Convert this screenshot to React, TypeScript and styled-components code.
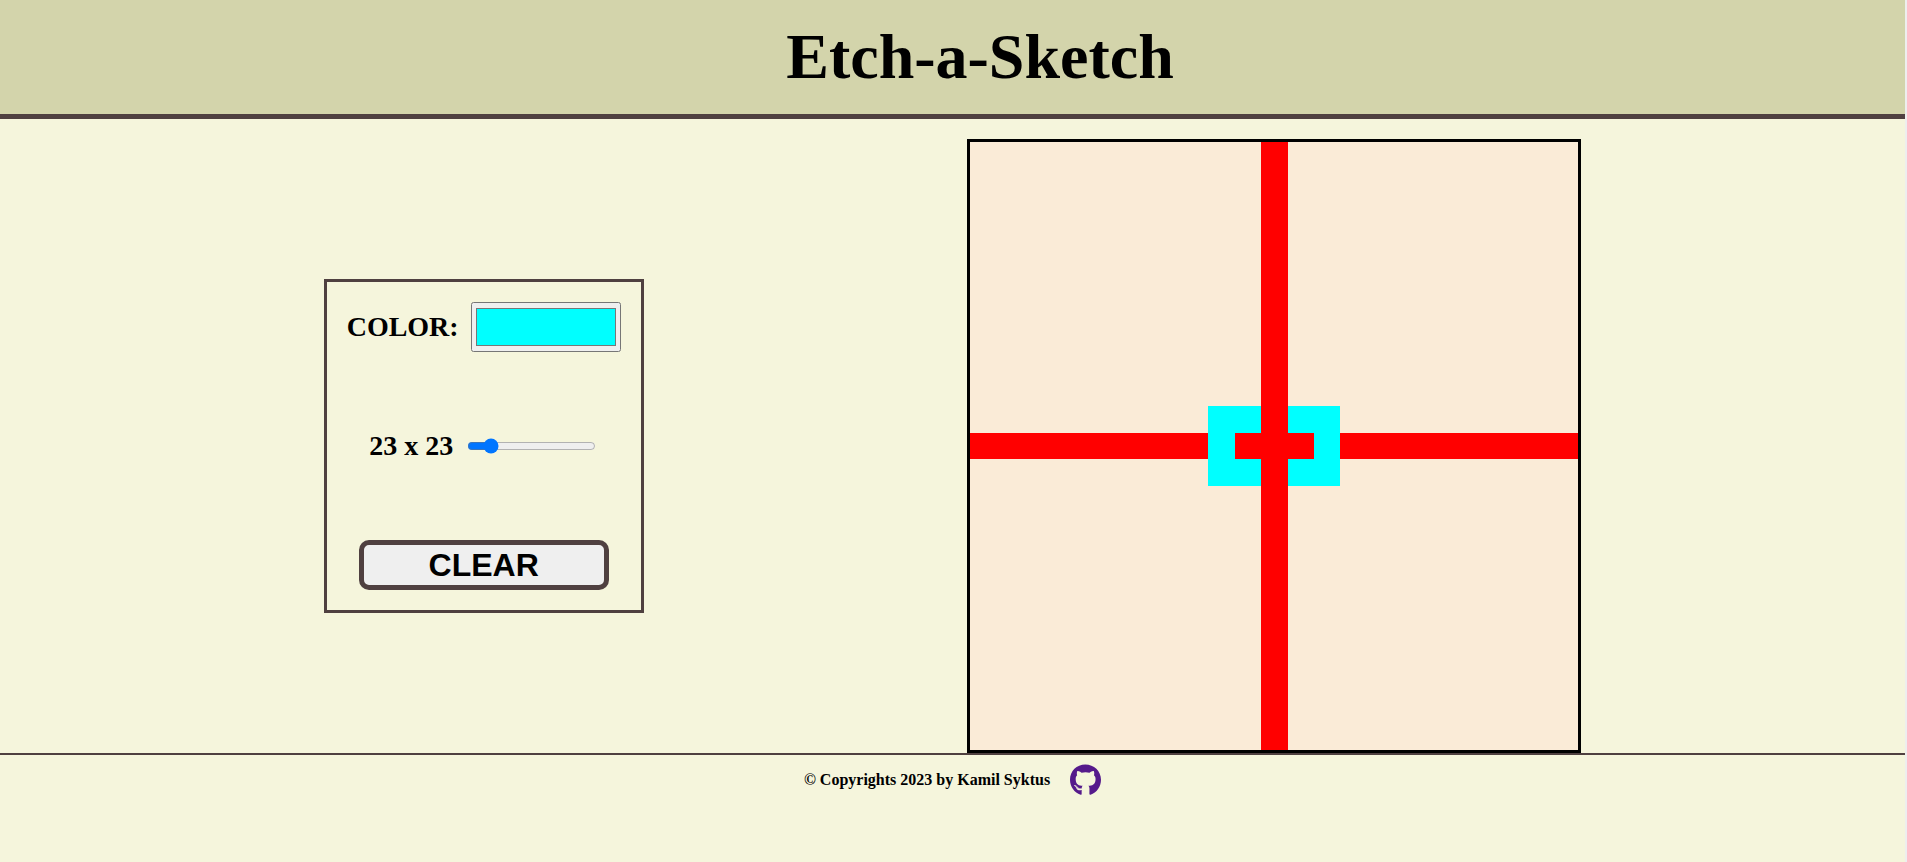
import React, { useState } from "react";
import styled, { createGlobalStyle } from "styled-components";
import { FaGithub } from "react-icons/fa";

const GlobalStyle = createGlobalStyle`
  *, *::before, *::after { box-sizing: border-box; }
  body {
    margin: 0;
    background: #f5f5dc;
    font-family: "Liberation Serif", "Times New Roman", serif;
    color: #000;
  }
`;

const Page = styled.div`
  display: flex;
  flex-direction: column;
  min-height: 100vh;
  border-right: 2px solid #eee;
`;

const Header = styled.header`
  padding: 20px 0 20px 55px;
  background: #d3d4ab;
  border-bottom: 5px solid #4f4040;
  text-align: center;
`;

const Title = styled.h1`
  margin: 0;
  font-size: 64px;
  line-height: 74px;
`;

const Main = styled.main`
  display: flex;
  flex-wrap: wrap;
  align-items: center;
  justify-content: space-evenly;
  padding-top: 20px;
`;

const Panel = styled.section`
  display: flex;
  flex-direction: column;
  align-items: center;
  gap: 70px;
  padding: 20px;
  border: 3px solid #4f4040;
`;

const Field = styled.div`
  display: flex;
  align-items: center;
  gap: 12px;
  min-height: 48px;
`;

const Label = styled.label`
  font-size: 28px;
  font-weight: bold;
  line-height: 32px;
`;

const ColorInput = styled.input`
  width: 150px;
  height: 50px;
`;

const SizeInput = styled.input`
  width: 129px;
  margin: 2px;
`;

const ClearButton = styled.button`
  width: 250px;
  height: 50px;
  padding: 0;
  border: 5px solid #4f4040;
  border-radius: 10px;
  background: #efefef;
  color: #000;
  font-family: "Liberation Sans", Arial, sans-serif;
  font-size: 32px;
  font-weight: bold;
  line-height: 36px;
`;

const Board = styled.div<{ $size: number }>`
  display: grid;
  grid-template-columns: repeat(${(p) => p.$size}, 1fr);
  grid-template-rows: repeat(${(p) => p.$size}, 1fr);
  width: 614px;
  max-width: 100%;
  aspect-ratio: 1;
  border: 3px solid #000;
  background: #faebd7;
`;

const Cell = styled.div<{ $color: string }>`
  background: ${(p) => p.$color};
`;

const Footer = styled.footer`
  display: flex;
  align-items: center;
  justify-content: center;
  gap: 20px;
  padding-top: 9px;
  border-top: 2px solid #4f4040;
`;

const Copyright = styled.p`
  margin: 0;
  font-size: 16px;
  font-weight: bold;
  line-height: 18px;
`;

const GithubLink = styled.a`
  display: flex;
  color: #551a8b;
`;

const GithubIcon = styled(FaGithub)`
  width: 31px;
  height: 32px;
`;

const startCells = (size: number): string[] => {
  const mid = Math.floor(size / 2);
  return Array.from({ length: size * size }, (_, i) => {
    const dx = Math.abs((i % size) - mid);
    const dy = Math.abs(Math.floor(i / size) - mid);
    if (dx === 0 || (dy === 0 && dx !== 2)) return "#ff0000";
    if (dx <= 2 && dy <= 1) return "#00ffff";
    return "transparent";
  });
};

const blankCells = (size: number): string[] =>
  Array.from({ length: size * size }, () => "transparent");

export default function App() {
  const [color, setColor] = useState("#00ffff");
  const [size, setSize] = useState(23);
  const [cells, setCells] = useState(() => startCells(23));

  const resize = (next: number) => {
    setSize(next);
    setCells(blankCells(next));
  };

  const paint = (index: number) =>
    setCells((prev) => prev.map((c, i) => (i === index ? color : c)));

  return (
    <>
      <GlobalStyle />
      <Page>
        <Header>
          <Title>Etch-a-Sketch</Title>
        </Header>
        <Main>
          <Panel>
            <Field>
              <Label htmlFor="color">COLOR:</Label>
              <ColorInput
                id="color"
                type="color"
                value={color}
                onChange={(e) => setColor(e.target.value)}
              />
            </Field>
            <Field>
              <Label htmlFor="size">
                {size} x {size}
              </Label>
              <SizeInput
                id="size"
                type="range"
                min={10}
                max={100}
                value={size}
                onChange={(e) => resize(Number(e.target.value))}
              />
            </Field>
            <ClearButton type="button" onClick={() => setCells(blankCells(size))}>
              CLEAR
            </ClearButton>
          </Panel>
          <Board $size={size}>
            {cells.map((c, i) => (
              <Cell key={i} $color={c} onMouseEnter={() => paint(i)} />
            ))}
          </Board>
        </Main>
        <Footer>
          <Copyright>© Copyrights 2023 by Kamil Syktus</Copyright>
          <GithubLink href="https://github.com/" aria-label="GitHub">
            <GithubIcon aria-hidden="true" />
          </GithubLink>
        </Footer>
      </Page>
    </>
  );
}
